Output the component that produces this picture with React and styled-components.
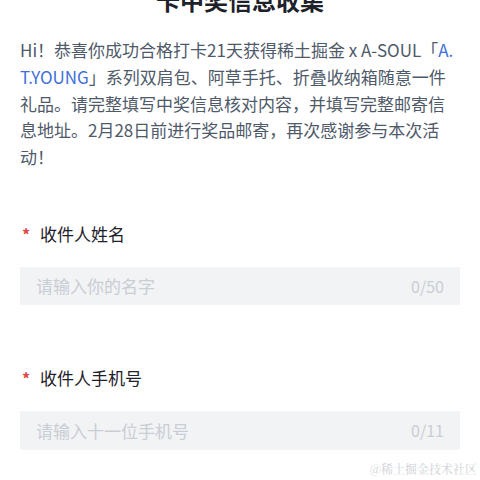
import React from "react";
import styled, { createGlobalStyle } from "styled-components";

const GlobalStyle = createGlobalStyle`
  html, body {
    margin: 0;
    padding: 0;
    background: #fff;
    overflow: hidden;
  }
  body {
    font-family: "Noto Sans CJK SC", "Noto Sans", sans-serif;
  }
`;

const Page = styled.div`
  position: relative;
  display: flow-root;
  width: 480px;
  height: 480px;
  padding: 0 20px;
  box-sizing: border-box;
`;

const Title = styled.h1`
  margin: -17px 0 0;
  font-size: 24px;
  line-height: 34px;
  font-weight: 600;
  text-align: center;
  color: #1d2129;
`;

const Intro = styled.p`
  margin: 20px 0 0;
  font-size: 17px;
  line-height: 26.75px;
  color: #4e5969;
  word-break: break-all;
`;

const Link = styled.span`
  color: #3f6fd8;
`;

const Form = styled.form`
  display: flex;
  flex-direction: column;
  gap: 61px;
  margin-top: 51px;
`;

const Field = styled.div`
  display: flex;
  flex-direction: column;
  gap: 21px;
`;

const Label = styled.label`
  display: flex;
  align-items: center;
  font-size: 17px;
  line-height: 24px;
  color: #1d2129;
`;

const Star = styled.span`
  width: 20px;
  padding-left: 2px;
  box-sizing: border-box;
  color: #e24545;
  font-size: 16px;
  font-weight: 600;
  line-height: 24px;
`;

const InputBox = styled.div`
  display: flex;
  align-items: center;
  height: ${(p) => p.$h}px;
  padding: 0 16px;
  background: #f2f3f5;
  border-radius: 2px;
`;

const Input = styled.input`
  flex: 1;
  min-width: 0;
  border: none;
  outline: none;
  background: transparent;
  padding: 0;
  font-family: inherit;
  font-size: 17px;
  color: #1d2129;
  &::placeholder {
    color: #c9cdd4;
  }
`;

const Count = styled.span`
  font-size: 16px;
  color: #c9cdd4;
`;

const Watermark = styled.div`
  position: absolute;
  right: 3px;
  bottom: 3px;
  font-family: "Noto Serif CJK SC", "Noto Sans CJK SC", serif;
  font-size: 12px;
  color: #cfd2d6;
`;

const fields = [
  { label: "收件人姓名", placeholder: "请输入你的名字", max: 50, h: 38 },
  { label: "收件人手机号", placeholder: "请输入十一位手机号", max: 11, h: 39 },
];

export default function App() {
  return (
    <Page>
      <GlobalStyle />
      <Title>卡中奖信息收集</Title>
      <Intro>
        Hi！恭喜你成功合格打卡21天获得稀土掘金 x A-SOUL「<Link>A.T.YOUNG</Link>」系列双肩包、阿草手托、折叠收纳箱随意一件礼品。请完整填写中奖信息核对内容，并填写完整邮寄信息地址。2月28日前进行奖品邮寄，再次感谢参与本次活动！
      </Intro>
      <Form>
        {fields.map((f) => (
          <Field key={f.label}>
            <Label>
              <Star>*</Star>
              {f.label}
            </Label>
            <InputBox $h={f.h}>
              <Input placeholder={f.placeholder} maxLength={f.max} />
              <Count>0/{f.max}</Count>
            </InputBox>
          </Field>
        ))}
      </Form>
      <Watermark>@稀土掘金技术社区</Watermark>
    </Page>
  );
}
